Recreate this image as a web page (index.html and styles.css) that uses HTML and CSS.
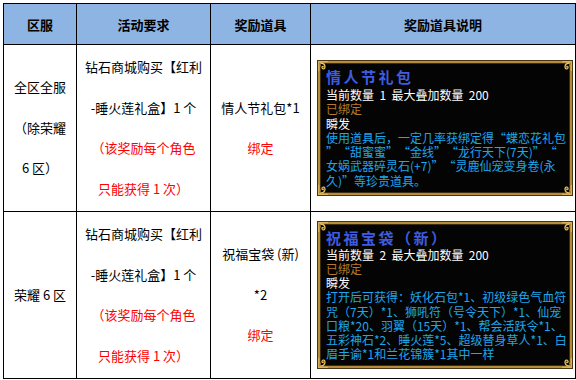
FILE: index.html
```html
<!DOCTYPE html>
<html lang="zh-CN">
<head>
<meta charset="utf-8">
<link rel="stylesheet" href="styles.css">
</head>
<body>
<svg width="0" height="0" class="defs">
  <defs>
    <g id="orn">
      <path d="M0.5 0.5 L10 0.5 M0.5 0.5 L0.5 10" stroke="#d9b25a" stroke-width="1.6" fill="none"/>
      <path d="M2 2 C5 2 7 3 7 6 C7 8 5 8.5 4.2 7.2 C3.6 6 4.8 5 5.6 5.8" stroke="#e8c66a" stroke-width="1.3" fill="none"/>
      <path d="M2 2 C2 5 3 7 6 7" stroke="#a07a30" stroke-width="1" fill="none"/>
    </g>
  </defs>
</svg>
<div class="page">
<table class="award">
  <colgroup>
    <col class="c1"><col class="c2"><col class="c3"><col class="c4">
  </colgroup>
  <thead>
    <tr class="head">
      <th>区服</th><th>活动要求</th><th>奖励道具</th><th>奖励道具说明</th>
    </tr>
  </thead>
  <tbody>
    <tr class="row">
      <td class="txt">全区全服<br>（除荣耀<br>6 区）</td>
      <td class="txt">钻石商城购买【红利<br>-睡火莲礼盒】1 个<br><span class="red">（该奖励每个角色<br>只能获得 1 次）</span></td>
      <td class="txt">情人节礼包*1<br><span class="red">绑定</span></td>
      <td class="tipcell">
        <div class="tip t1">
          <svg class="orn tl" viewBox="0 0 11 11"><use href="#orn"/></svg>
          <svg class="orn tr" viewBox="0 0 11 11"><use href="#orn"/></svg>
          <svg class="orn bl" viewBox="0 0 11 11"><use href="#orn"/></svg>
          <svg class="orn br" viewBox="0 0 11 11"><use href="#orn"/></svg>
          <div class="tip-title">情人节礼包</div>
          <div class="w">当前数量&nbsp;&nbsp;1&nbsp;&nbsp;最大叠加数量&nbsp;&nbsp;200</div>
          <div class="bound">已绑定</div>
          <div class="w">瞬发</div>
          <div class="desc">使用道具后，一定几率获绑定得<span class="qo">“</span>蝶恋花礼包<br><span class="qc">”</span><span class="qo">“</span>甜蜜蜜<span class="qc">”</span><span class="qo">“</span>金线<span class="qc">”</span><span class="qo">“</span>龙行天下(7天)<span class="qc">”</span><span class="qo">“</span><br>女娲武器碎灵石(+7)<span class="qc">”</span><span class="qo">“</span>灵鹿仙宠变身卷(永<br>久)<span class="qc">”</span>等珍贵道具。</div>
        </div>
      </td>
    </tr>
    <tr class="row">
      <td class="txt">荣耀 6 区</td>
      <td class="txt">钻石商城购买【红利<br>-睡火莲礼盒】1 个<br><span class="red">（该奖励每个角色<br>只能获得 1 次）</span></td>
      <td class="txt">祝福宝袋 (新)<br>*2<br><span class="red">绑定</span></td>
      <td class="tipcell">
        <div class="tip t2">
          <svg class="orn tl" viewBox="0 0 11 11"><use href="#orn"/></svg>
          <svg class="orn tr" viewBox="0 0 11 11"><use href="#orn"/></svg>
          <svg class="orn bl" viewBox="0 0 11 11"><use href="#orn"/></svg>
          <svg class="orn br" viewBox="0 0 11 11"><use href="#orn"/></svg>
          <div class="tip-title">祝福宝袋（新）</div>
          <div class="w">当前数量&nbsp;&nbsp;2&nbsp;&nbsp;最大叠加数量&nbsp;&nbsp;200</div>
          <div class="bound">已绑定</div>
          <div class="w">瞬发</div>
          <div class="desc">打开后可获得：妖化石包*1、初级绿色气血符<br>咒（7天）*1、狮吼符（号令天下）*1、仙宠<br>口粮*20、羽翼（15天）*1、帮会活跃令*1、<br>五彩神石*2、睡火莲*5、超级替身草人*1、白<br>眉手谕*1和兰花锦簇*1其中一样</div>
        </div>
      </td>
    </tr>
  </tbody>
</table>
</div>
</body>
</html>
```

FILE: styles.css
```css
html, body {
  margin: 0;
  padding: 0;
  background: #ffffff;
}
.defs {
  position: absolute;
  width: 0;
  height: 0;
}
.page {
  padding: 3px 0 0 3px;
}
.award {
  border-collapse: collapse;
  table-layout: fixed;
  width: 572px;
  font-family: "Noto Sans CJK SC", "Noto Sans", sans-serif;
  font-size: 13px;
  color: #000;
}
.c1 { width: 73px; }
.c2 { width: 134px; }
.c3 { width: 100px; }
.c4 { width: 265px; }
.award th, .award td {
  border: 1px solid #000;
  padding: 0;
  text-align: center;
  vertical-align: middle;
}
.head th {
  background: #8eb4e3;
  height: 40px;
  font-weight: bold;
  font-size: 13px;
}
.row td {
  height: 166px;
}
.txt {
  line-height: 40.5px;
  white-space: nowrap;
}
.red {
  color: #ff0000;
}
.tipcell {
  padding: 0 0 0 7px !important;
  text-align: left !important;
}
.tip {
  position: relative;
  width: 238px;
  background: #040404;
  border: 2px solid #b58c3c;
  box-shadow: 0 0 0 1px #4a3514, inset 0 0 0 1px #3d2c10;
  padding: 4px 6px 5px 6px;
  font-size: 12px;
  line-height: 14.2px;
  white-space: nowrap;
  color: #fff;
  font-family: "Noto Sans CJK SC", "Noto Sans", sans-serif;
}
.tip-title {
  color: #3f5ce0;
  font-size: 15px;
  line-height: 20px;
  letter-spacing: 2.5px;
  font-weight: bold;
}
.t1 .tip-title { margin-bottom: 1px; }
.w { color: #ffffff; }
.bound { color: #b77a26; }
.desc { color: #1fa6ea; }
.qo, .qc {
  display: inline-block;
  width: 12px;
}
.qo { text-align: right; }
.qc { text-align: left; }
.orn {
  position: absolute;
  width: 11px;
  height: 11px;
}
.orn.tl { left: -2px; top: -2px; }
.orn.tr { right: -2px; top: -2px; transform: scaleX(-1); }
.orn.bl { left: -2px; bottom: -2px; transform: scaleY(-1); }
.orn.br { right: -2px; bottom: -2px; transform: scale(-1, -1); }
```
